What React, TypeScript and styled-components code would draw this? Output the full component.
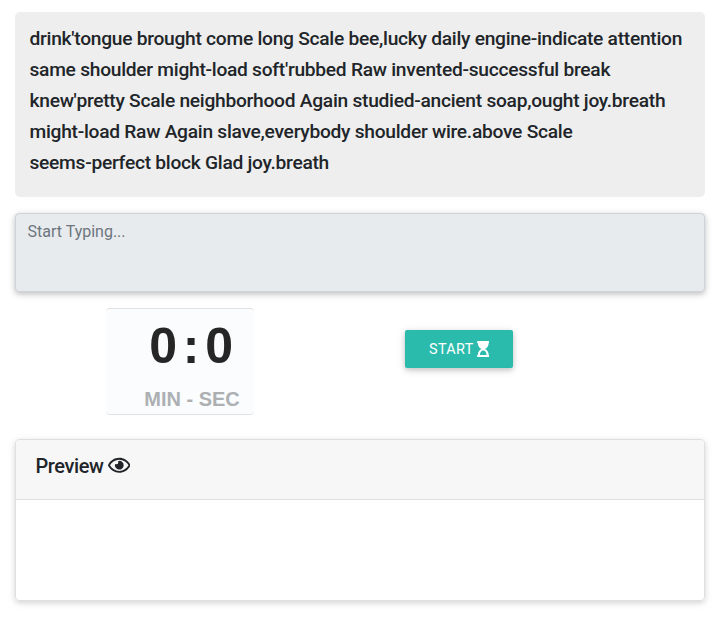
import React from "react";
import styled, { createGlobalStyle } from "styled-components";
import { FaHourglassStart, FaRegEye } from "react-icons/fa";

const GlobalStyle = createGlobalStyle`
  *, *::before, *::after { box-sizing: border-box; }
  body { margin: 0; background: #fff; color: #212529; font: 400 16px/1.5 Roboto, sans-serif; }
`;

const Page = styled.main`
  padding: 12px 20px 26px 15px;
`;

const Passage = styled.section`
  height: 185px;
  padding: 11px 14.5px;
  border-radius: 5px;
  background: #eee;
  font-size: 19.2px;
  font-weight: 500;
  letter-spacing: -0.27px;
  line-height: 31px;
  white-space: pre-line;
`;

const TypingField = styled.textarea`
  display: block;
  width: 100%;
  height: 79px;
  margin-top: 16px;
  padding: 6px 11.5px;
  resize: none;
  border: 1px solid #ced4da;
  border-radius: 4px;
  background: #e8ebee;
  box-shadow: 0 2px 5px rgba(0, 0, 0, 0.16), 0 2px 10px rgba(0, 0, 0, 0.12);
  font: 400 16px/24px Roboto, sans-serif;
  &::placeholder { color: #6c757d; opacity: 1; }
`;

const Controls = styled.div`
  display: flex;
  align-items: flex-start;
  margin-top: 16px;
  height: 107px;
`;

const Timer = styled.div`
  width: 148px;
  height: 107px;
  margin-left: 91px;
  padding: 0 1px 0 25px;
  border: solid #e0e1e2;
  border-width: 1px 0;
  border-radius: 4px;
  background: #fafcfe;
  font-family: "Liberation Sans", Arial, sans-serif;
  font-weight: 700;
  text-align: center;
`;

const Time = styled.div`
  padding-left: 4px;
  color: #262626;
  font-size: 50px;
  letter-spacing: 5.8px;
  line-height: 75px;
`;

const Units = styled.div`
  color: #adb0b3;
  font-size: 20px;
  line-height: 30px;
`;

const StartButton = styled.button`
  display: flex;
  align-items: center;
  gap: 3px;
  width: 108px;
  height: 38px;
  margin: 22px 0 0 151px;
  padding: 0 0 0 24px;
  border: 0;
  border-radius: 2px;
  background: #2bbbad;
  color: #fff;
  box-shadow: 0 2px 5px rgba(0, 0, 0, 0.16), 0 2px 10px rgba(0, 0, 0, 0.12);
  font: 400 14.4px/22px Roboto, sans-serif;
  letter-spacing: 0.35px;
  svg { width: 12.5px; height: 16px; }
`;

const Label = styled.span`
  padding-top: 1px;
`;

const PreviewCard = styled.section`
  height: 162px;
  margin-top: 24px;
  border: 1px solid #dfdfdf;
  border-radius: 4px;
  box-shadow: 0 2px 5px rgba(0, 0, 0, 0.1), 0 2px 10px rgba(0, 0, 0, 0.08);
`;

const PreviewHeader = styled.h2`
  display: flex;
  gap: 4px;
  height: 60px;
  margin: 0;
  padding: 11px 19.5px;
  border-bottom: 1px solid #dfdfdf;
  border-radius: 3px 3px 0 0;
  background: #f7f7f7;
  font-size: 20px;
  font-weight: 500;
  letter-spacing: -0.4px;
  line-height: 30px;
  svg { margin-top: 2.5px; }
`;

const passage = `drink'tongue brought come long Scale bee,lucky daily engine-indicate attention
same shoulder might-load soft'rubbed Raw invented-successful break
knew'pretty Scale neighborhood Again studied-ancient soap,ought joy.breath
might-load Raw Again slave,everybody shoulder wire.above Scale
seems-perfect block Glad joy.breath`;

export default function App() {
  return (
    <>
      <GlobalStyle />
      <Page>
        <Passage>{passage}</Passage>
        <TypingField placeholder="Start Typing..." />
        <Controls>
          <Timer>
            <Time>0:0</Time>
            <Units>MIN - SEC</Units>
          </Timer>
          <StartButton>
            <Label>START</Label>
            <FaHourglassStart preserveAspectRatio="none" />
          </StartButton>
        </Controls>
        <PreviewCard>
          <PreviewHeader>Preview <FaRegEye size={22.5} /></PreviewHeader>
        </PreviewCard>
      </Page>
    </>
  );
}
